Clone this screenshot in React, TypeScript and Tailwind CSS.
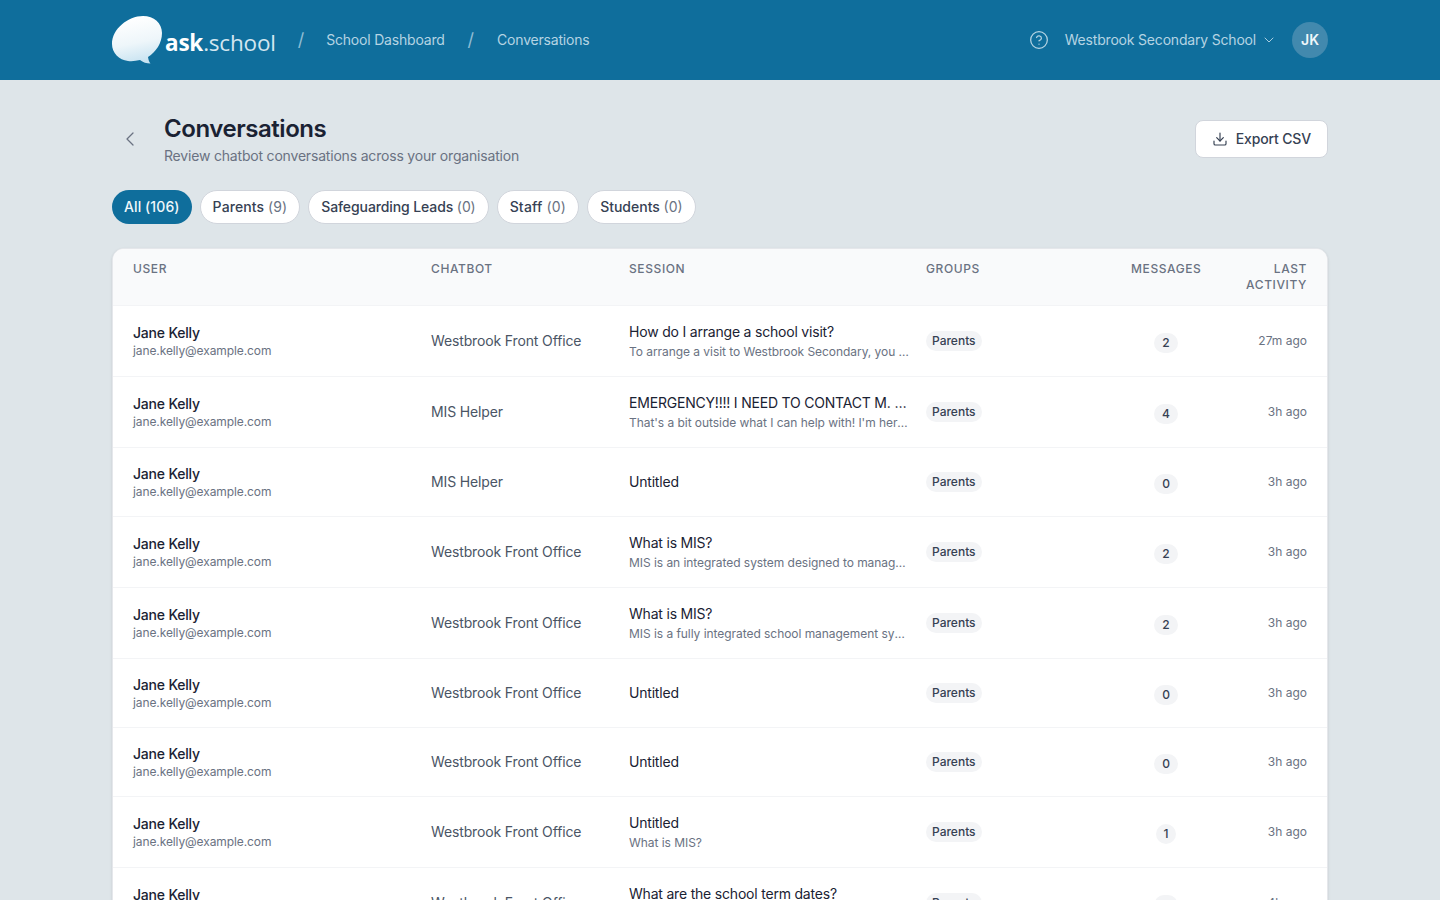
import { ChevronDown, ChevronLeft, CircleHelp, Download } from 'lucide-react';

const TABS = [
  { label: 'Parents', count: 9, track: 'tracking-[0.1px]' },
  { label: 'Safeguarding Leads', count: 0, track: 'tracking-[-0.1px]' },
  { label: 'Staff', count: 0, track: 'tracking-[0.2px]' },
  { label: 'Students', count: 0, track: 'tracking-normal' },
];

const FRONT = 'Westbrook Front Office';

const ROWS = [
  { bot: FRONT, title: 'How do I arrange a school visit?', preview: 'To arrange a visit to Westbrook Secondary, you can contact the office', msgs: 2, ago: '27m ago' },
  { bot: 'MIS Helper', title: 'EMERGENCY!!!! I NEED TO CONTACT M. SMITH', preview: "That's a bit outside what I can help with! I'm here to help with MIS", msgs: 4, ago: '3h ago' },
  { bot: 'MIS Helper', title: 'Untitled', preview: '', msgs: 0, ago: '3h ago' },
  { bot: FRONT, title: 'What is MIS?', preview: 'MIS is an integrated system designed to manage school information', msgs: 2, ago: '3h ago' },
  { bot: FRONT, title: 'What is MIS?', preview: 'MIS is a fully integrated school management system for all schools', msgs: 2, ago: '3h ago' },
  { bot: FRONT, title: 'Untitled', preview: '', msgs: 0, ago: '3h ago' },
  { bot: FRONT, title: 'Untitled', preview: '', msgs: 0, ago: '3h ago' },
  { bot: FRONT, title: 'Untitled', preview: 'What is MIS?', msgs: 1, ago: '3h ago' },
  { bot: FRONT, title: 'What are the school term dates?', preview: 'The school term dates for this year are listed on the website', msgs: 2, ago: '4h ago' },
];

function Logo() {
  return (
    <div className="flex items-center">
      <svg width="50" height="48" viewBox="0 0 50 48" className="mr-[3px]">
        <defs>
          <linearGradient id="bubble" x1="0.35" y1="0.05" x2="0.55" y2="1">
            <stop offset="0" stopColor="#ffffff" />
            <stop offset="0.55" stopColor="#eef6fa" />
            <stop offset="1" stopColor="#c6e2f1" />
          </linearGradient>
        </defs>
        <path
          d="M31 0C42 0 50 7 50 17C50 27 44 36 36 41C36.5 44 37 46 38.5 47.5C34.5 47.5 31 46.5 28 44C24 45 20 45.5 16 45C7 44 0 37 0 28C0 13 16 0 31 0Z"
          fill="url(#bubble)"
        />
      </svg>
      <span className="text-[22.5px] leading-none text-[#d3e6f0] font-['Open_Sans',sans-serif] mt-1.5 tracking-[-0.2px]">
        <span className="font-bold text-white">ask</span>.school
      </span>
    </div>
  );
}

function Header() {
  return (
    <header className="bg-[#0f6e9c] h-20">
      <div className="max-w-[1280px] mx-auto px-8 h-full flex items-center justify-between">
        <div className="flex items-center">
          <Logo />
          <span className="ml-[22px] text-lg text-[#8fbdd4]">/</span>
          <span className="ml-[22px] text-sm tracking-[-0.2px] text-[#b5d4e3]">School Dashboard</span>
          <span className="ml-[23px] text-lg text-[#8fbdd4]">/</span>
          <span className="ml-[23px] text-sm tracking-[-0.2px] text-[#b5d4e3]">Conversations</span>
        </div>
        <div className="flex items-center">
          <CircleHelp size={20} strokeWidth={1.5} className="text-[#b5d4e3]" />
          <span className="ml-4 text-sm tracking-[-0.19px] text-[#b5d4e3]">Westbrook Secondary School</span>
          <ChevronDown size={16} strokeWidth={1.5} className="ml-[5px] text-[#a9cde0]" />
          <div className="ml-[15px] w-9 h-9 rounded-full bg-[#4289ae] flex items-center justify-center text-sm font-semibold text-[#f0f7fa]">
            JK
          </div>
        </div>
      </div>
    </header>
  );
}

function Tabs() {
  return (
    <div className="flex items-center gap-2 mt-[25px]">
      <button className="h-[34px] px-3 rounded-full bg-[#0f6e9c] text-sm font-medium tracking-[0.1px] text-[#f0f7fa]">All (106)</button>
      {TABS.map(({ label, count, track }) => (
        <button
          key={label}
          className={`h-[34px] px-3 rounded-full bg-white border border-gray-300 text-sm font-medium text-gray-700 ${track}`}
        >
          {label} <span className="font-normal text-gray-500">({count})</span>
        </button>
      ))}
    </div>
  );
}

function Table() {
  const th = 'align-top px-2 py-3 text-xs font-medium tracking-wider uppercase text-gray-500 leading-4';
  return (
    <div className="mt-6 mb-10 bg-white rounded-xl border border-gray-200 shadow-sm overflow-hidden">
      <table className="w-full table-fixed border-collapse text-left">
        <colgroup>
          <col className="w-[310px]" />
          <col className="w-[198px]" />
          <col className="w-[297px]" />
          <col className="w-[205px]" />
          <col className="w-[86px]" />
          <col />
        </colgroup>
        <thead>
          <tr className="bg-gray-50 border-b border-gray-100">
            <th className={`${th} pl-5`}>User</th>
            <th className={th}>Chatbot</th>
            <th className={th}>Session</th>
            <th className={th}>Groups</th>
            <th className={`${th} text-center`}>Messages</th>
            <th className={`${th} pr-5 text-right`}>Last Activity</th>
          </tr>
        </thead>
        <tbody>
          {ROWS.map((row, i) => (
            <tr key={i} className="border-b border-gray-100">
              <td className="pl-5 pr-2 py-4 align-middle">
                <p className="text-sm leading-5 font-medium tracking-[-0.2px] text-[#1a2233]">Jane Kelly</p>
                <p className="text-xs leading-4 tracking-[-0.1px] text-gray-500">jane.kelly@example.com</p>
              </td>
              <td className="px-2 py-4 align-middle text-sm tracking-[-0.14px] text-gray-600">{row.bot}</td>
              <td className="px-2 py-4 align-middle">
                <p className="text-sm leading-5 tracking-[-0.2px] text-[#1a2233] truncate">{row.title}</p>
                {row.preview && <p className="mt-0.5 text-xs leading-4 tracking-[-0.05px] text-gray-500 truncate">{row.preview}</p>}
              </td>
              <td className="px-2 py-4 align-middle">
                <span className="block w-fit rounded-full bg-gray-100 px-1.5 py-0.5 text-xs leading-4 font-medium text-gray-700">
                  Parents
                </span>
              </td>
              <td className="px-2 py-4 align-middle">
                <span className="block w-fit mx-auto mt-1 rounded-full bg-gray-100 px-2 py-0.5 text-xs leading-4 font-medium text-gray-700">
                  {row.msgs}
                </span>
              </td>
              <td className="pl-2 pr-5 py-4 align-middle text-right text-xs text-gray-500">{row.ago}</td>
            </tr>
          ))}
        </tbody>
      </table>
    </div>
  );
}

export default function App() {
  return (
    <div className="min-h-screen bg-[#dee5e9] font-['Inter',sans-serif]">
      <Header />
      <main className="max-w-[1280px] mx-auto px-8 pt-[33px]">
        <div className="flex items-center justify-between">
          <div className="flex items-center">
            <ChevronLeft size={24} strokeWidth={1.25} className="ml-1.5 text-gray-500" />
            <div className="ml-[22px]">
              <h1 className="text-2xl leading-8 mb-px font-semibold tracking-[-0.45px] text-[#1a2233]">Conversations</h1>
              <p className="text-sm leading-5 -mb-px tracking-[-0.19px] text-gray-500">Review chatbot conversations across your organisation</p>
            </div>
          </div>
          <button className="h-[38px] px-4 flex items-center gap-2 rounded-lg bg-white border border-gray-300 text-sm font-medium tracking-[-0.15px] text-gray-700">
            <Download size={16} strokeWidth={1.75} />
            Export CSV
          </button>
        </div>
        <Tabs />
        <Table />
      </main>
    </div>
  );
}
